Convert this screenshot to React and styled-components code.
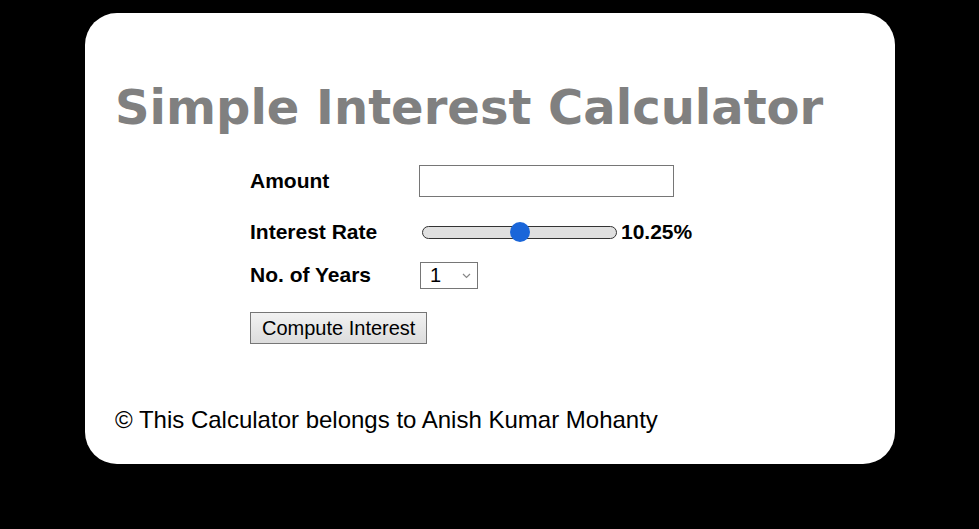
import React, { useState } from "react";
import styled, { createGlobalStyle } from "styled-components";

const GlobalStyle = createGlobalStyle`
    html, body {
        margin: 0;
        padding: 0;
        background: #000;
    }
    body {
        font-family: "Liberation Sans", Arial, sans-serif;
    }
`;

const Page = styled.div`
    width: 979px;
    height: 529px;
    background: #000;
    padding: 13px 0 0 85px;
    box-sizing: border-box;
`;

const Card = styled.div`
    width: 810px;
    height: 451px;
    background: #fff;
    border-radius: 32px;
    box-sizing: border-box;
    padding: 74px 30px 0 30px;
    display: flex;
    flex-direction: column;
`;

const Title = styled.h1`
    margin: 0;
    font-family: Verdana, "DejaVu Sans", sans-serif;
    font-weight: bold;
    font-size: 48px;
    line-height: 40px;
    color: #808080;
`;

const Form = styled.div`
    display: flex;
    flex-direction: column;
    margin: 38px 0 0 135px;
`;

const Row = styled.div`
    display: flex;
    align-items: center;
    height: ${(p) => p.$h || 30}px;
    margin-top: ${(p) => p.$top || 0}px;
`;

const Label = styled.label`
    width: 169px;
    flex-shrink: 0;
    font-weight: bold;
    font-size: 21px;
    color: #000;
`;

const TextInput = styled.input`
    width: 255px;
    height: 32px;
    box-sizing: border-box;
    border: 1px solid #767676;
    margin: 0;
    font-size: 18px;
`;

const Range = styled.input`
    -webkit-appearance: none;
    appearance: none;
    width: 195px;
    height: 20px;
    margin: 0 4px 0 3px;
    background: transparent;

    &::-webkit-slider-runnable-track {
        height: 13px;
        box-sizing: border-box;
        background: #e0e0e0;
        border: 1px solid #333;
        border-radius: 7px;
    }
    &::-webkit-slider-thumb {
        -webkit-appearance: none;
        width: 20px;
        height: 20px;
        margin-top: -4.5px;
        border-radius: 50%;
        background: #1a66d9;
        border: none;
    }
`;

const RateValue = styled.span`
    font-weight: bold;
    font-size: 21px;
`;

const SelectWrap = styled.div`
    position: relative;
    margin-left: 1px;
    width: 58px;
    height: 27px;
`;

const Select = styled.select`
    -webkit-appearance: none;
    appearance: none;
    width: 100%;
    height: 100%;
    box-sizing: border-box;
    border: 1px solid #767676;
    border-radius: 0;
    background: #fff;
    padding: 0 0 0 9px;
    font-size: 20px;
    font-family: "Liberation Sans", Arial, sans-serif;
    color: #000;
`;

const Chevron = styled.svg`
    position: absolute;
    right: 7px;
    top: 11px;
    pointer-events: none;
`;

const Button = styled.button`
    height: 32px;
    box-sizing: border-box;
    padding: 0 11px;
    border: 1px solid #767676;
    border-radius: 0;
    background: linear-gradient(#f2f2f2, #dcdcdc);
    font-size: 20px;
    font-family: "Liberation Sans", Arial, sans-serif;
    color: #000;
`;

const Footer = styled.p`
    margin: auto 0 30px 0;
    font-size: 24px;
    color: #000;
`;

export default function App() {
    const [rate, setRate] = useState(10.25);
    return (
        <Page>
            <GlobalStyle />
            <Card>
                <Title>Simple Interest Calculator</Title>
                <Form>
                    <Row $h={32}>
                        <Label htmlFor="amount">Amount</Label>
                        <TextInput id="amount" type="text" />
                    </Row>
                    <Row $top={20}>
                        <Label htmlFor="rate">Interest Rate</Label>
                        <Range
                            id="rate"
                            type="range"
                            min="0.5"
                            max="20"
                            step="0.25"
                            value={rate}
                            onChange={(e) => setRate(e.target.value)}
                        />
                        <RateValue>{Number(rate).toFixed(2)}%</RateValue>
                    </Row>
                    <Row $top={13}>
                        <Label htmlFor="years">No. of Years</Label>
                        <SelectWrap>
                            <Select id="years" defaultValue="1">
                                {[1, 2, 3, 4, 5, 6, 7, 8, 9, 10].map((y) => (
                                    <option key={y} value={y}>{y}</option>
                                ))}
                            </Select>
                            <Chevron width="9" height="6" viewBox="0 0 9 6">
                                <path d="M1 1l3.5 3.5L8 1" fill="none" stroke="#888" strokeWidth="1.2" />
                            </Chevron>
                        </SelectWrap>
                    </Row>
                    <Row $h={32} $top={22}>
                        <Button>Compute Interest</Button>
                    </Row>
                </Form>
                <Footer>© This Calculator belongs to Anish Kumar Mohanty</Footer>
            </Card>
        </Page>
    );
}
